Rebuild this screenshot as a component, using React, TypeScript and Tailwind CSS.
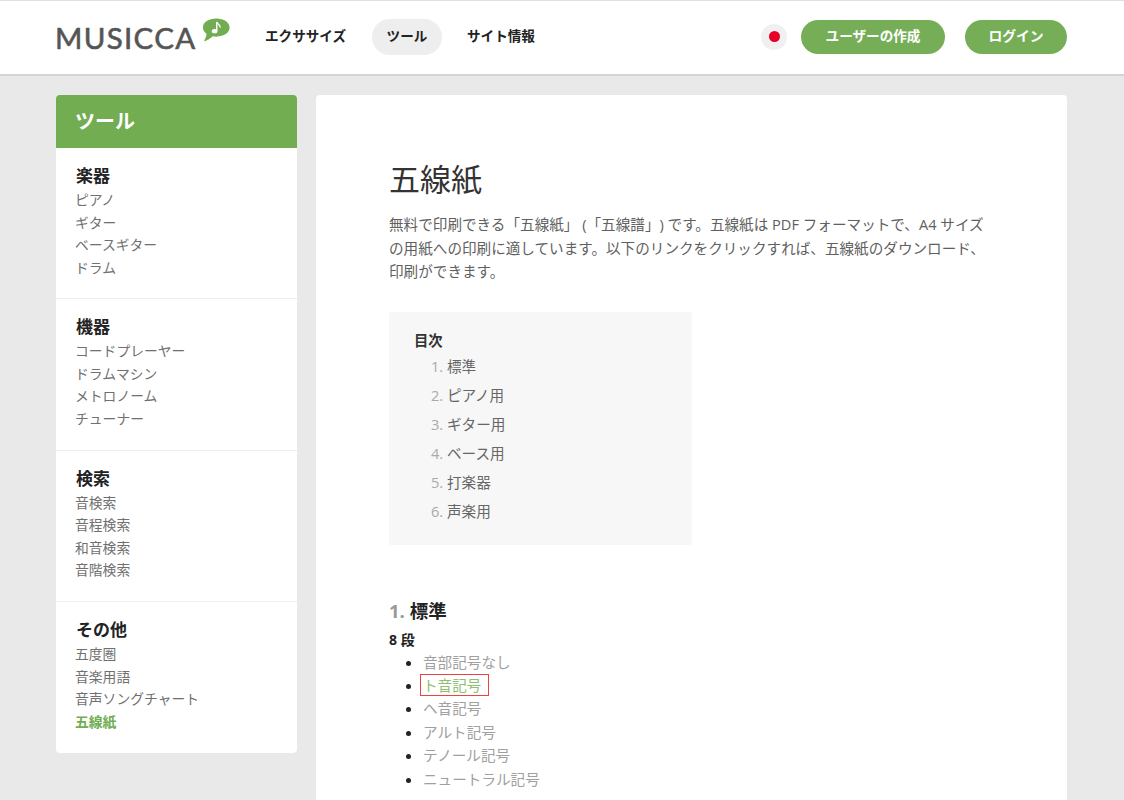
const sideGroups = [
  { title: "楽器", items: ["ピアノ", "ギター", "ベースギター", "ドラム"] },
  { title: "機器", items: ["コードプレーヤー", "ドラムマシン", "メトロノーム", "チューナー"] },
  { title: "検索", items: ["音検索", "音程検索", "和音検索", "音階検索"] },
  { title: "その他", items: ["五度圏", "音楽用語", "音声ソングチャート", "五線紙"] },
];

const toc = ["標準", "ピアノ用", "ギター用", "ベース用", "打楽器", "声楽用"];
const clefs = ["音部記号なし", "ト音記号", "ヘ音記号", "アルト記号", "テノール記号", "ニュートラル記号"];

function Logo() {
  return (
    <div className="flex items-start w-[176px] -mt-[7px] -ml-[1px]">
      <span className="font-['Lato',sans-serif] text-[29.500px] leading-none tracking-[1.300px] text-[#555] mt-[8px] [-webkit-text-stroke:0.6px_#555]">MUSICCA</span>
      <svg width="30" height="26" viewBox="0 0 30 26" className="ml-[6px] mt-[2px]">
        <path d="M15 1C7 1 1 4.800 1 10.500c0 2.800 1.500 5 3.800 6.500C4.600 19.500 3.500 22 2 25c3.800-1 7-3.200 9.300-5.400 1.200.2 2.400.4 3.700.4 8 0 14-4 14-9.500S23 1 15 1z" fill="#72ad52" />
        <path d="M15.500 4.500v9.500" stroke="#fff" strokeWidth="1.500" fill="none" />
        <path d="M15.500 4.500c.5 2.600 4 2.800 3.600 6" stroke="#fff" strokeWidth="1.400" fill="none" />
        <ellipse cx="13.200" cy="14.200" rx="2.900" ry="2.300" fill="#fff" />
      </svg>
    </div>
  );
}

export default function App() {
  return (
    <div className="min-h-[800px] h-[800px] overflow-hidden bg-[#e9e9e9] text-[#222] font-['Open_Sans','Noto_Sans_CJK_JP',sans-serif]">
      <header className="h-[76px] bg-white border-t border-t-[#e0e0e0] border-b-2 border-b-[#d4d4d4] flex items-center pl-[56px] pr-[57px]">
        <Logo />
        <nav className="flex items-center ml-[18px] mb-[2px] text-[13.600px] font-bold text-[#222]">
          <a className="pl-[16px] w-[113px] h-[36px] flex items-center">エクササイズ</a>
          <a className="ml-[10px] w-[70px] justify-center h-[36px] flex items-center rounded-full bg-[#eeeeee]">ツール</a>
          <a className="ml-[9px] px-[16px] h-[36px] flex items-center">サイト情報</a>
        </nav>
        <div className="ml-auto mb-[2px] flex items-center">
          <div className="w-[26px] h-[26px] rounded-full bg-[#f0f0f0] flex items-center justify-center">
            <div className="w-[11px] h-[11px] rounded-full bg-[#e60026]" />
          </div>
          <a className="ml-[14px] w-[144px] h-[34px] rounded-full bg-[#76ae58] text-white text-[13.600px] font-bold flex items-center justify-center">ユーザーの作成</a>
          <a className="ml-[20px] w-[102px] h-[34px] rounded-full bg-[#76ae58] text-white text-[13.800px] font-bold flex items-center justify-center">ログイン</a>
        </div>
      </header>

      <div className="flex gap-[19px] pl-[56px] pr-[57px] pt-[19px]">
        <aside className="w-[241px] shrink-0 self-start bg-white rounded-[4px] overflow-hidden">
          <div className="h-[53px] bg-[#72ad52] text-white text-[20px] font-bold flex items-center pl-[19px]">ツール</div>
          {sideGroups.map((g, i) => (
            <div key={g.title} className={i < 3 ? "pl-[19px] pt-[17px] h-[151.400px] border-b border-[#eeeeee]" : "pl-[19px] pt-[17px] h-[151px]"}>
              <div className="ml-[1px] text-[17px] font-bold leading-[22px] text-[#222] mb-[2px]">{g.title}</div>
              {g.items.map((item) => (
                <div key={item} className={item === "五線紙" ? "text-[13.800px] leading-[22.500px] font-bold text-[#72ad52]" : "text-[13.800px] leading-[22.500px] text-[#707070]"}>
                  {item}
                </div>
              ))}
            </div>
          ))}
        </aside>

        <main className="flex-1 min-w-0 bg-white rounded-[4px] pl-[73px] pr-[78px] pt-[62px] h-[800px]">
          <h1 className="text-[31px] leading-[44px] text-[#333]">五線紙</h1>
          <p className="mt-[12px] text-[14.600px] leading-[23.500px] text-[#606060] w-[600px] [text-spacing-trim:space-all]">
            無料で印刷できる「五線紙」 (「五線譜」) です。五線紙は PDF フォーマットで、A4 サイズの用紙への印刷に適しています。以下のリンクをクリックすれば、五線紙のダウンロード、印刷ができます。
          </p>
          <div className="mt-[28px] w-[303px] h-[233px] bg-[#f7f7f7] rounded-[2px] pl-[25px] pt-[19px]">
            <div className="text-[14.300px] font-bold leading-[20px] text-[#333]">目次</div>
            <ol className="mt-[1px] pl-[17px]">
              {toc.map((t, i) => (
                <li key={t} className="text-[14.600px] leading-[29.100px] text-[#666]">
                  <span className="text-[#aaa]">{i + 1}. </span>{t}
                </li>
              ))}
            </ol>
          </div>
          <h2 className="mt-[53px] text-[18.500px] font-bold leading-[26px] text-[#222]">
            <span className="text-[#999]">1.</span> 標準
          </h2>
          <div className="mt-[6px] text-[14px] font-bold leading-[20px] text-[#222]">8 段</div>
          <ul className="mt-[1px] list-disc pl-[34px] marker:text-[#222]">
            {clefs.map((c) => (
              <li key={c} className="text-[14.600px] leading-[23.400px]">
                {c === "ト音記号" ? (
                  <span className="inline-block border border-[#f04040] pl-[2px] pr-[7px] leading-[20px] -ml-[3px] text-[#8fc070]">{c}</span>
                ) : (
                  <span className="text-[#a0a0a0]">{c}</span>
                )}
              </li>
            ))}
          </ul>
        </main>
      </div>
    </div>
  );
}
